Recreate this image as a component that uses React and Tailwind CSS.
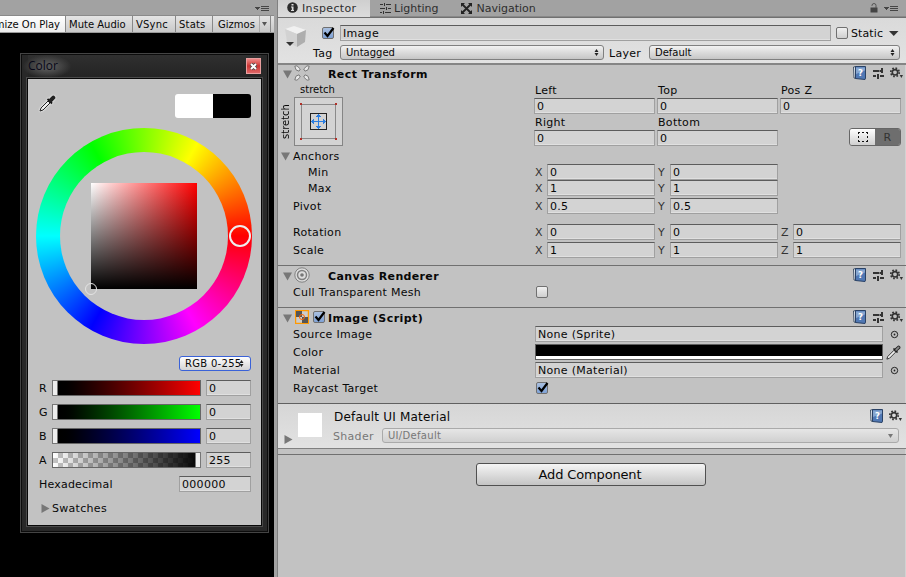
import clsx from 'clsx';

const FIELD = 'border border-[#a0a0a0] border-t-[#5c5c5c] bg-[#d3d3d3] shadow-[inset_0_-1px_0_#e0e0e0]';
const POPUP = 'border border-[#808080] rounded-[3px] bg-linear-to-b from-[#f2f2f2] to-[#c6c6c6]';

function Label({ children, className }) {
  return <span className={clsx('block whitespace-nowrap', className)}>{children}</span>;
}

// label for vertically centred rows, sits one pixel under the row's middle
function RowLabel({ children, className }) {
  return <span className={clsx('block pt-[2px] whitespace-nowrap', className)}>{children}</span>;
}

function Field({ value, className }) {
  return (
    <div className={clsx(FIELD, 'h-4 pl-[2px] leading-[15px] whitespace-nowrap', className)}>{value}</div>
  );
}

function Fold({ open = true, className }) {
  return (
    <svg width="9" height="9" viewBox="0 0 9 9" className={clsx('shrink-0', className)}>
      <path d={open ? 'M0 0.5h9L4.5 8.5z' : 'M0.5 0v9L8.5 4.5z'} fill="#777" />
    </svg>
  );
}

function Check({ on, className }) {
  return (
    <div
      className={clsx(
        'relative size-3 shrink-0 rounded-[2px] border border-[#707070] bg-linear-to-b',
        on ? 'from-[#a9bfdf] to-[#7fa2d6]' : 'from-[#f0f0f0] to-[#cfcfcf]',
        className
      )}
    >
      {on && (
        <svg width="13" height="12" viewBox="0 0 13 12" className="absolute -top-[2px] -left-[1px]">
          <path d="M2.5 6.500l3 3.500L11.500 2" fill="none" stroke="#000" strokeWidth="2.200" />
        </svg>
      )}
    </div>
  );
}

function UpDown({ className }) {
  return (
    <svg width="5" height="7" viewBox="0 0 5 7" className={clsx('shrink-0', className)}>
      <path d="M2.5 0L4.5 3h-4zM2.5 7L4.5 4h-4z" fill="#222" />
    </svg>
  );
}

function Book() {
  return (
    <svg width="13" height="14" viewBox="0 0 13 14">
      <path d="M0.500 1L3 0.500v12L1 12z" fill="#e4eaf2" stroke="#27384f" strokeWidth="0.8" />
      <path d="M2.500 0.500h10V12L12 13.500 2.500 12.500z" fill="#5078b4" stroke="#2a4266" />
      <path d="M3 1.500h9v3L3 8z" fill="#86a6d0" />
      <text x="5" y="10" fontSize="8.5" fontWeight="bold" fill="#fff">?</text>
    </svg>
  );
}

function Preset() {
  return (
    <svg width="11" height="11" viewBox="0 0 11 11">
      <path d="M0 2h6.500v2H0zM8 0h2v5H8zM7 2h1v2H7zM0 7h3v2H0zM4 6h2v5H4zM7 7h4v2H7z" fill="#333" />
    </svg>
  );
}

function Gear() {
  return (
    <svg width="13" height="12" viewBox="0 0 13 12">
      <circle cx="5" cy="5.300" r="2.700" fill="none" stroke="#333" strokeWidth="1.600" />
      <circle cx="5" cy="5.300" r="4.200" fill="none" stroke="#333" strokeWidth="1.700" strokeDasharray="1.650 1.650" />
      <path d="M9.700 8h3.300l-1.600 3z" fill="#333" />
    </svg>
  );
}

function MenuGlyph() {
  return (
    <svg width="14" height="6" viewBox="0 0 14 6" shapeRendering="crispEdges">
      <path d="M0 1h5v1H4v1H3v1H2V3H1V2H0zM6 0h8v1H6zM6 2h8v1H6zM6 4h8v1H6z" fill="#454545" />
    </svg>
  );
}

function Dropper({ size = 17, bulb = '#222', className }) {
  return (
    <svg width={size} height={size} viewBox="0 0 17 17" className={clsx('shrink-0', className)}>
      <path d="M1 16l1-3 7-7 2 2-7 7z" fill="#eee" stroke="#222" />
      <path d="M8.500 4l4.500 4.500" stroke="#111" strokeWidth="1.800" />
      <path d="M11.500 5.500l2.800-2.800" stroke="#222" strokeWidth="4" strokeLinecap="round" />
      <path d="M11.500 5.500l2.800-2.800" stroke={bulb} strokeWidth="2" strokeLinecap="round" />
    </svg>
  );
}

function HeaderIcons() {
  return (
    <div className="ml-auto flex items-start pr-[3px]">
      <Book />
      <div className="ml-[7px] mt-[2px]"><Preset /></div>
      <div className="ml-[6px] mt-[1px]"><Gear /></div>
    </div>
  );
}

const SLIDERS = [
  { name: 'R', value: '0', bar: 'from-black to-[#f00]' },
  { name: 'G', value: '0', bar: 'from-black to-[#0f0]' },
  { name: 'B', value: '0', bar: 'from-black to-[#00f]' },
  { name: 'A', value: '255', bar: 'from-transparent to-black', end: true },
];

function ColorWheel() {
  return (
    <div className="relative mt-[10px] ml-2 size-[216px] rounded-full bg-[conic-gradient(from_90deg,#f00,#f0f,#00f,#0ff,#0f0,#ff0,#f00)] p-[24px]">
      <div className="size-[168px] rounded-full bg-[#c2c2c2] p-[31px]">
        <div className="size-[106px] bg-[linear-gradient(to_top,#000,transparent),linear-gradient(to_right,#fff,#f00)]" />
      </div>
      <div className="absolute top-[97px] left-[193px] size-[22px] rounded-full border-2 border-[#eee]" />
      <div className="absolute top-[155px] left-[49px] size-3 rounded-full border border-[#e4e4e4]" />
    </div>
  );
}

function ColorWindow() {
  return (
    <div className="ml-5 mt-5 h-[480px] w-[249px] border border-[#444] bg-[#282828] px-[7px] pt-[1px] shadow-[inset_0_0_0_1px_#0c0c0c]">
      <div className="flex h-6 items-start bg-linear-to-b from-[#303030] to-[#232323]">
        <div className="-ml-[5px] h-[23px] w-[48px] bg-[radial-gradient(ellipse_at_center,#555_20%,transparent_72%)] pl-[5px] pt-[2px] font-['Open_Sans'] text-[12px] leading-[17px] tracking-normal text-[#080818]">Color</div>
        <div className="mt-[3px] ml-auto flex h-4 w-[15px] items-center justify-center border border-[#e9a0a0] bg-linear-to-b from-[#e88] via-[#c33] to-[#d66]">
          <svg width="9" height="9" viewBox="0 0 9 9"><path d="M2 2l5 5M7 2L2 7" stroke="#444" strokeWidth="3.500" /><path d="M2 2l5 5M7 2L2 7" stroke="#fff" strokeWidth="2" /></svg>
        </div>
      </div>
      <div className="h-[446px] w-[233px] bg-[#c2c2c2] pt-[15px] shadow-[0_0_0_1px_#080808,0_0_0_2px_#4a4a4a]">
        <div className="flex justify-between pl-[11px] pr-[10px]">
          <Dropper className="mt-[1px] drop-shadow-[0_0_1px_#fff]" />
          <div className="flex h-6 w-[76px] overflow-hidden rounded-[3px]">
            <div className="flex-1 bg-white" />
            <div className="flex-1 bg-black" />
          </div>
        </div>
        <ColorWheel />
        <div className="mt-3 ml-[151px] flex h-[15px] w-[72px] items-center rounded-[3px] border border-[#3a62d8] bg-linear-to-b from-white to-[#d4d4d4] pl-[5px] text-[10px] tracking-[0.3px]">
          <span>RGB 0-255</span><UpDown className="-ml-[3px]" />
        </div>
        <div className="mt-[9px] flex flex-col gap-2">
          {SLIDERS.map((s) => (
            <div key={s.name} className="flex h-4 items-center pl-[11px]">
              <RowLabel className="w-[13px]">{s.name}</RowLabel>
              <div className={clsx('h-4 w-[149px] border border-[#666]', s.end && 'bg-white bg-[repeating-conic-gradient(#c4c4c4_0_25%,#fff_0_50%)] bg-[length:10px_10px]')}>
                <div className={clsx('flex h-full bg-linear-to-r', s.bar, s.end && 'justify-end')}>
                  <div className="h-full w-1 bg-[#eee] outline outline-[#777]" />
                </div>
              </div>
              <Field value={s.value} className="ml-[5px] w-[45px]" />
            </div>
          ))}
        </div>
        <div className="mt-2 flex h-4 items-center pl-[11px]">
          <RowLabel className="w-[140px] tracking-[0.2px]">Hexadecimal</RowLabel>
          <Field value="000000" className="w-[72px]" />
        </div>
        <div className="mt-2 flex h-4 items-center pl-[13px]">
          <Fold open={false} /><RowLabel className="ml-[2px]">Swatches</RowLabel>
        </div>
      </div>
    </div>
  );
}

function GamePanel() {
  return (
    <div className="flex w-[274px] shrink-0 flex-col bg-black tracking-[0.3px]">
      <div className="flex h-4 justify-end border-b border-[#8a8a8a] bg-[#a2a2a2] pt-[6px] pr-[5px]"><MenuGlyph /></div>
      <div className="flex h-[17px] overflow-hidden border-b border-[#999] bg-linear-to-b from-[#e4e4e4] to-[#c8c8c8] text-[10px] leading-[17px] tracking-normal whitespace-nowrap">
        <div className="flex w-[66px] shrink-0 justify-end border-r border-[#888] bg-linear-to-b from-white to-[#ececec] pr-[5px]">Maximize On Play</div>
        <div className="w-[67px] border-r border-[#888] pl-[3px]">Mute Audio</div>
        <div className="w-[43px] border-r border-[#888] pl-[3px] tracking-[0.2px]">VSync</div>
        <div className="w-[37px] border-r border-[#888] pl-[3px] tracking-[0.2px]">Stats</div>
        <div className="w-[47px] border-r border-[#aaa] pl-[5px]">Gizmos</div>
        <div className="w-[11px] border-r border-[#888] pt-[6px] pl-[2px]"><svg width="5" height="4" className="block"><path d="M0 0h5L2.500 4z" fill="#555" /></svg></div>
      </div>
      <ColorWindow />
    </div>
  );
}

function Tabs() {
  return (
    <div className="flex h-[18px] border-b border-[#707070] bg-[#a2a2a2] leading-[17px] text-[#2e2e2e]">
      <div className="flex w-[92px] bg-linear-to-b from-[#cfcfcf] to-[#dcdcdc] pl-[9px]">
        <svg width="11" height="11" viewBox="0 0 11 11" className="mt-[2px]"><circle cx="5.500" cy="5.500" r="5.300" fill="#2b2b2b" /><path d="M4.500 2h2v1.500h-2zM4 4.500h2.500V8H7v1H4V8h.800V5.500H4z" fill="#ddd" /></svg>
        <Label className="ml-[4px] tracking-[0.35px]">Inspector</Label>
      </div>
      <div className="flex border-b border-[#888] pl-[10px]">
        <svg width="11" height="11" viewBox="0 0 11 11" shapeRendering="crispEdges" className="mt-[3px]"><path d="M0 1h3v1H0zM4 0h1v3H4zM6 1h5v1H6zM0 5h5v1H0zM6 4h1v3H6zM8 5h3v1H8zM0 9h2v1H0zM3 8h1v3H3zM5 9h6v1H5z" fill="#333" /></svg>
        <Label className="ml-[3px] tracking-normal">Lighting</Label>
      </div>
      <div className="flex border-b border-[#888] pl-[23px]">
        <svg width="11" height="11" viewBox="0 0 11 11" className="mt-[3px]"><path d="M1 1l9 9M10 1L1 10" stroke="#222" strokeWidth="1.800" /><path d="M0 0h4L0 4zM11 0H7l4 4zM0 11h4L0 7zM11 11H7l4-4z" fill="#222" /></svg>
        <Label className="ml-[4px] tracking-normal">Navigation</Label>
      </div>
      <div className="flex flex-1 items-start justify-end gap-[6px] border-b border-[#888] pt-[3px] pr-[8px]">
        <svg width="8" height="10" viewBox="0 0 8 10"><path d="M0.500 4.500h7v5h-7z" fill="#444" /><path d="M2 3V2.500a2 2 0 014 0V5" fill="none" stroke="#555" /></svg>
        <div className="pt-[3px]"><MenuGlyph /></div>
      </div>
    </div>
  );
}

function ObjectHeader() {
  return (
    <div className="flex h-[47px] border-b-2 border-[#858585] bg-linear-to-b from-[#dadada] to-[#e2e2e2] pt-[7px]">
      <svg width="24" height="24" viewBox="0 0 24 24" className="ml-[6px] shrink-0">
        <path d="M1 4l9-3 12 4-9 4z" fill="#f1f1f1" />
        <path d="M1 4l12 5v13L3 17z" fill="#d2d2d2" />
        <path d="M13 9l9-4-1 12-8 5z" fill="#aeaeae" />
        <path d="M2 17h8l-4 4z" fill="#333" />
      </svg>
      <div className="flex-1">
        <div className="flex h-4 items-center pl-[14px]">
          <Check on />
          <Field value="Image" className="ml-[6px] w-[491px]" />
          <Check className="ml-[5px]" /><RowLabel className="ml-[3px] w-[32px] tracking-[0.1px]">Static</RowLabel>
          <svg width="10" height="5" className="ml-[6px]"><path d="M0 0h9.500L4.750 5z" fill="#333" /></svg>
        </div>
        <div className="mt-[4px] flex h-[15px] items-center pl-[5px]">
          <RowLabel className="w-[27px]">Tag</RowLabel>
          <div className={clsx(POPUP, 'flex h-[15px] w-[264px] items-center justify-between pl-[5px] pr-[4px] text-[10px] tracking-normal')}>Untagged<UpDown /></div>
          <RowLabel className="ml-[5px] w-[40px]">Layer</RowLabel>
          <div className={clsx(POPUP, 'flex h-[15px] w-[251px] items-center justify-between pl-[5px] pr-[4px] text-[10px] tracking-normal')}>Default<UpDown /></div>
        </div>
      </div>
    </div>
  );
}

function AxisRow({ label, values, className }) {
  const axes = ['X', 'Y', 'Z'];
  return (
    <div className={clsx('flex h-4 items-center', className)}>
      <RowLabel className="flex-1">{label}</RowLabel>
      <div className="flex w-[371px] gap-[3px]">
        {values.map((v, i) => (
          <div key={axes[i]} className="flex h-4 w-[120px] items-center">
            <RowLabel className="w-[12px] text-[#333]">{axes[i]}</RowLabel>
            <Field value={v} className="w-[108px]" />
          </div>
        ))}
      </div>
    </div>
  );
}

function Anchor() {
  return (
    <div className="flex w-[65px] flex-col">
      <Label className="h-[13px] pl-[22px] text-[10px] leading-[12px] tracking-normal">stretch</Label>
      <div className="flex">
        <div className="flex h-[49px] w-[16px] justify-center pt-[7px]">
          <span className="h-[35px] rotate-180 text-[10px] leading-[12px] tracking-normal [writing-mode:vertical-rl]">stretch</span>
        </div>
        <svg width="49" height="49" viewBox="0 0 49 49" shapeRendering="crispEdges">
          <rect x="0.500" y="0.500" width="48" height="48" fill="#d3d3d3" stroke="#858585" />
          <rect x="7.500" y="7.500" width="34" height="34" fill="none" stroke="#8a8a8a" />
          <path d="M6 6h2v2H6zM41 6h2v2h-2zM6 41h2v2H6zM41 41h2v2h-2z" fill="#b03028" />
          <rect x="16.500" y="16.500" width="16" height="16" fill="#d3d3d3" stroke="#222" />
          <path d="M24 17h1v15h-1zM17 24h15v1H17zM23 18h3v1h-3zM22 19h5v1h-5zM22 29h5v1h-5zM23 30h3v1h-3zM19 22h1v5h-1zM18 23h1v3h-1zM29 22h1v5h-1zM30 23h1v3h-1z" fill="#2a7de1" />
        </svg>
      </div>
    </div>
  );
}

function RectTransform() {
  return (
    <section className="h-[201px] border-b border-[#707070] pt-[1px]">
      <div className="flex h-[18px]">
        <Fold className="ml-[5px] mt-[4px]" />
        <svg width="16" height="16" viewBox="0 0 16 16" className="ml-[2px] -mt-px">
          <path d="M0.800 1.200L3 0.800 6.300 4 5 6.200 2 4.800zM15.200 1.200L13 0.800 9.700 4 11 6.200 14 4.800zM0.800 14.800L3 15.200 6.300 12 5 9.800 2 11.200zM15.200 14.800L13 15.200 9.700 12 11 9.800 14 11.200z" fill="#e8e8e8" stroke="#7a7a7a" strokeLinejoin="round" />
        </svg>
        <Label className="ml-[18px] pt-px font-bold tracking-[0.4px]">Rect Transform</Label>
        <HeaderIcons />
      </div>
      <div className="flex h-[64px] justify-between pr-[5px]">
        <Anchor />
        <div className="grid w-[367px] grid-cols-[121px_121px_121px] grid-rows-[14px_18px_14px_18px] gap-x-[2px] leading-[14px]">
          <Label className="pl-px">Left</Label><Label className="pl-px">Top</Label><Label className="pl-px">Pos Z</Label>
          <Field value="0" /><Field value="0" /><Field value="0" />
          <Label className="pl-px">Right</Label><Label className="pl-px">Bottom</Label><span />
          <Field value="0" /><Field value="0" />
          <div className="-mt-[2px] ml-auto flex h-[18px] w-[52px] overflow-hidden rounded-[3px] border border-[#666]">
            <div className="flex flex-1 items-center justify-center bg-linear-to-b from-white to-[#d0d0d0]">
              <svg width="10" height="10" viewBox="0 0 10 10" shapeRendering="crispEdges">
                <path d="M0 0h2v1H1v1H0zM4 0h2v1H4zM8 0h2v2H9V1H8zM0 4h1v2H0zM9 4h1v2H9zM0 8h1v1h1v1H0zM4 9h2v1H4zM9 8h1v2H8V9h1z" fill="#111" />
              </svg>
            </div>
            <div className="w-[25px] bg-[#6e6e6e] text-center leading-[17px] text-[#333]">R</div>
          </div>
        </div>
      </div>
      <div className="flex h-4 items-center pl-[3px]"><Fold /><RowLabel className="ml-[3px]">Anchors</RowLabel></div>
      <AxisRow label="Min" values={['0', '0']} className="pl-[30px]" />
      <AxisRow label="Max" values={['1', '1']} className="pl-[30px]" />
      <AxisRow label="Pivot" values={['0.5', '0.5']} className="mt-[2px] pl-[15px]" />
      <AxisRow label="Rotation" values={['0', '0', '0']} className="mt-[10px] pl-[15px]" />
      <AxisRow label="Scale" values={['1', '1', '1']} className="mt-[2px] pl-[15px]" />
    </section>
  );
}

function Target() {
  return (
    <svg width="9" height="9" viewBox="0 0 9 9" className="ml-[7px]"><circle cx="4.500" cy="4.500" r="3.200" fill="none" stroke="#222" /><circle cx="4.500" cy="4.500" r="0.900" fill="#222" /></svg>
  );
}

function PropRow({ label, children, className }) {
  return (
    <div className={clsx('flex h-4 items-center pl-[15px]', className)}>
      <RowLabel className="w-[242px] shrink-0">{label}</RowLabel>
      {children}
    </div>
  );
}

export default function App() {
  return (
    <div className="flex h-[577px] w-[906px] overflow-hidden bg-[#a2a2a2] font-['DejaVu_Sans',sans-serif] text-[11px] leading-4 text-[#080808]">
      <GamePanel />
      <main className="ml-[3px] flex-1 border-l border-[#808080] bg-[#c2c2c2] tracking-[0.3px] shadow-[inset_-1px_0_0_#d2d2d2]">
        <Tabs />
        <ObjectHeader />
        <RectTransform />
        <section className="h-[42px] border-b border-[#707070] pt-[2px]">
          <div className="flex h-4">
            <Fold className="ml-[5px] mt-[4px]" />
            <svg width="16" height="16" viewBox="0 0 16 16" className="ml-[2px] -mt-px"><circle cx="8" cy="8" r="7.200" fill="#ddd" stroke="#808080" /><circle cx="8" cy="8" r="4.500" fill="none" stroke="#808080" strokeWidth="1.500" /><circle cx="8" cy="8" r="1.800" fill="#777" /></svg>
            <Label className="ml-[18px] pt-px font-bold tracking-[0.35px]">Canvas Renderer</Label>
            <HeaderIcons />
          </div>
          <PropRow label="Cull Transparent Mesh"><Check className="ml-px" /></PropRow>
        </section>
        <section className="h-[96px] border-b border-[#606060] pt-[2px]">
          <div className="flex h-4">
            <Fold className="ml-[5px] mt-[4px]" />
            <svg width="14" height="14" viewBox="0 0 14 14" className="ml-[3px]"><rect x="0.500" y="0.500" width="13" height="13" fill="#ccc" stroke="#f90" strokeWidth="1.500" /><path d="M1 1h6v6H1zM7 7h6v6H7z" fill="#555" /><circle cx="7" cy="7" r="2.500" fill="none" stroke="#f60" /></svg>
            <Check on className="ml-[4px] mt-px" />
            <Label className="ml-[3px] pt-px font-bold tracking-[0.45px]">Image (Script)</Label>
            <HeaderIcons />
          </div>
          <PropRow label="Source Image"><Field value="None (Sprite)" className="w-[348px]" /><Target /></PropRow>
          <PropRow label="Color" className="mt-[2px]">
            <div className="h-4 w-[348px] border border-[#606060] bg-white"><div className="h-[11px] bg-black" /></div>
            <Dropper size={15} bulb="#8a8a8a" className="ml-[3px]" />
          </PropRow>
          <PropRow label="Material" className="mt-[2px]"><Field value="None (Material)" className="w-[348px]" /><Target /></PropRow>
          <PropRow label="Raycast Target" className="mt-[2px]"><Check on className="ml-px" /></PropRow>
        </section>
        <section className="flex h-[45px] border-b border-[#808080] bg-linear-to-b from-[#d6d6d6] to-[#e2e2e2]">
          <Fold open={false} className="ml-[6px] mt-[31px]" />
          <div className="mt-[9px] ml-[5px] size-6 bg-white" />
          <div className="ml-[11px] flex-1">
            <div className="flex h-[24px] pt-[5px]">
              <Label className="ml-px text-[12px] tracking-[0.2px]">Default UI Material</Label>
              <div className="ml-auto flex items-start pr-[4px]"><Book /><div className="ml-[6px] mt-[1px]"><Gear /></div></div>
            </div>
            <div className="flex h-[15px] items-center text-[#777]">
              <RowLabel className="w-[49px]">Shader</RowLabel>
              <div className="flex h-[15px] w-[517px] items-center justify-between rounded-[3px] border border-[#aaa] bg-linear-to-b from-[#e6e6e6] to-[#d0d0d0] pl-[5px] pr-[5px] text-[10px]">UI/Default<svg width="5" height="4"><path d="M0 0h5L2.500 4z" fill="#777" /></svg></div>
            </div>
          </div>
        </section>
        <div className="h-[6px] border-b border-[#707070]" />
        <button className="mt-[8px] ml-[198px] block h-[23px] w-[230px] rounded-[3px] border border-[#505050] bg-linear-to-b from-[#f5f5f5] to-[#c4c4c4] pr-[2px] text-[13px] leading-5 tracking-[-0.15px]">Add Component</button>
      </main>
    </div>
  );
}
